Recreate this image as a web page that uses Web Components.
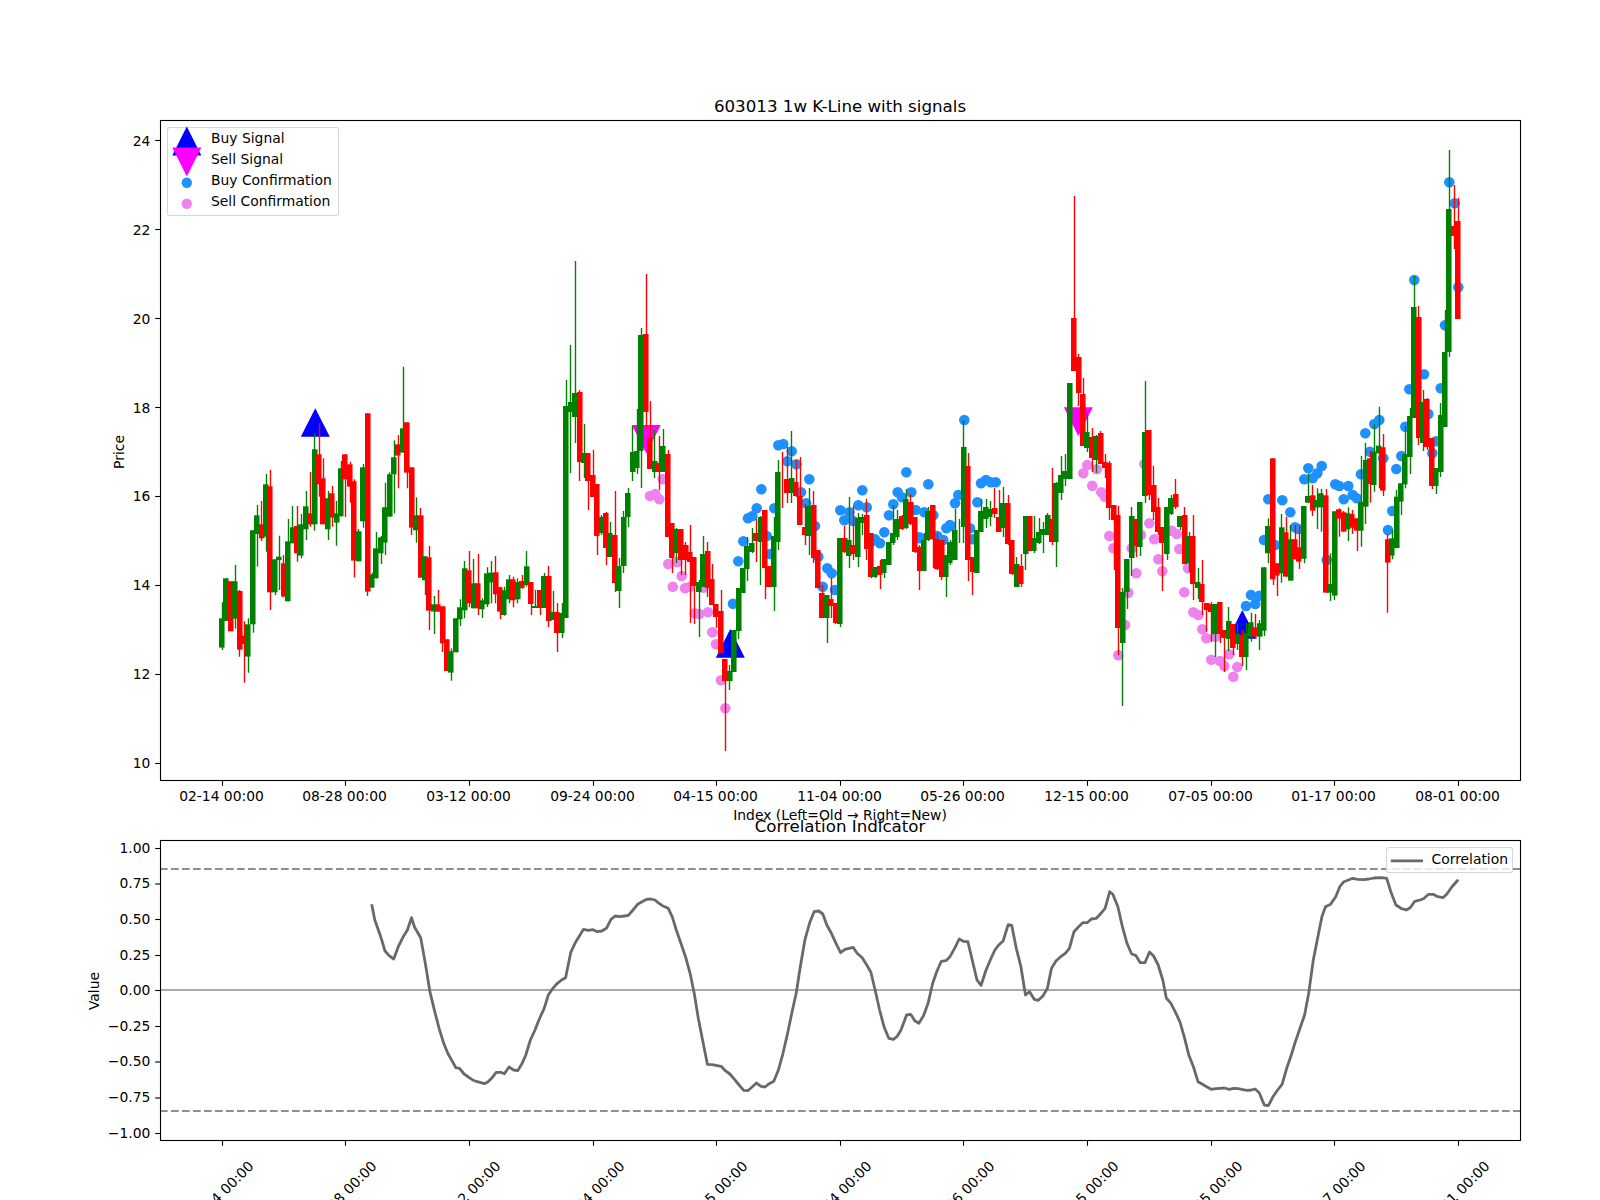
<!DOCTYPE html>
<html><head><meta charset="utf-8"><title>603013 1w K-Line</title>
<style>html,body{margin:0;background:#fff;width:1600px;height:1200px;overflow:hidden}</style>
</head><body>
<chart-figure>
  <price-chart>
    <chart-legend style="left:7px;top:7px;width:172px;height:89px">
      <legend-item kind="up">Buy Signal</legend-item>
      <legend-item kind="down">Sell Signal</legend-item>
      <legend-item kind="blue">Buy Confirmation</legend-item>
      <legend-item kind="violet">Sell Confirmation</legend-item>
    </chart-legend>
  </price-chart>
  <corr-chart>
    <chart-legend style="left:1226px;top:7px;width:127px;height:26px">
      <legend-item kind="line">Correlation</legend-item>
    </chart-legend>
  </corr-chart>
</chart-figure>
<script>
const FONT = `font-family:"DejaVu Sans",sans-serif`;
const X = i => 222.1 + 4.416 * i;
const LABELS = ["02-14 00:00","08-28 00:00","03-12 00:00","09-24 00:00","04-15 00:00","11-04 00:00","05-26 00:00","12-15 00:00","07-05 00:00","01-17 00:00","08-01 00:00"];
const TICKX = LABELS.map((_, k) => Math.floor(X(28 * k)) + .5);

function parseCandles(y0, k, first, text) {
  return text.trim().split(/\n/).map((r, n) => {
    const p = r.trim().split(/\s+/);
    const [t, b, wt, wb] = p.slice(1).map(Number);
    return { i: first + n, c: p[0] === 'G' ? '#008000' : '#ff0000', t: y0 + t / k, b: y0 + b / k, wt: y0 + wt / k, wb: y0 + wb / k, none: t === b };
  });
}
const CANDLES = [
 ...parseCandles(390, 3, 0, `G 685 773 637 780
G 565 693 565 693
R 574 724 574 724
G 574 686 525 716
R 603 779 600 800
R 737 762 694 878
G 703 800 685 848
G 421 703 421 728
G 376 432 345 530
R 403 445 333 453
G 283 440 252 485
R 289 607 240 660
G 508 607 508 615
G 500 510 437 600
R 520 620 495 622
G 454 634 387 634
G 412 460 348 460
R 408 490 348 515
G 403 497 372 505
G 349 418 303 450
R 370 403 246 410
G 178 403 130 422
R 193 283 100 320
R 265 403 205 403
G 325 418 303 450
R 310 383 288 410
G 370 398 333 467
G 235 379 213 379
R 193 268 193 381
R 223 290 215 338
R 274 512 268 562
G 424 514 417 514
G 232 394 222 413
R 70 605 70 618
G 553 593 548 593
G 475 565 426 565
G 442 490 438 522
G 352 458 278 495
G 253 380 247 380
G 202 253 151 370
R 163 197 135 295
G 115 188 -70 188
R 97 248 97 295
R 232 413 232 435
G 376 421 322 458
R 376 563 354 563
G 499 571 499 615
R 502 662 468 720
G 643 665 618 732
R 643 665 600 665
R 649 760 649 786
R 748 843 748 843
G 784 848 775 872
G 685 787 685 787
G 652 688 628 708
G 535 661 513 685
R 541 640 483 652
G 580 655 507 655
R 580 655 492 675
G 631 658 625 684
G 550 643 532 651
G 548 577 513 640
R 547 613 498 640
R 592 665 590 687
G 601 675 590 677
G 568 628 555 640
R 568 631 560 652
G 576 628 565 640
R 573 594 555 596
G 529 585 483 590`),
 ...parseCandles(0, 1, 70, `R 582 604 582 615
G 606 608 590 608
R 590 608 590 615
G 576 608 573 608
R 576 621 566 627
G 612 620 591 620
R 612 633 603 652
G 613 633 603 638
G 406 618 380 618
G 402 412 345 473
G 393 417 261 443
R 392 462 390 481
G 453 463 424 478
R 453 481 453 510
R 475 497 450 497
R 484 536 484 555
G 517 533 515 535
R 513 548 512 565
G 533 557 522 557
R 535 583 491 592
G 566 591 558 608
G 517 566 511 573
G 493 517 488 527
G 452 472 426 481
G 451 468 409 474
G 335 451 328 488
R 334 412 274 429
R 438 469 401 469
G 461 472 430 478
R 463 472 436 490
G 446 472 429 472
R 454 537 450 537
R 523 558 523 573
G 529 553 528 563
R 529 560 529 575
R 545 560 542 575
R 552 562 525 623
R 557 586 557 624
G 582 592 580 637
G 554 587 536 587
R 551 588 542 597
R 579 605 564 605
R 604 617 604 628
R 611 653 590 653
R 659 681 659 751
G 671 681 665 690
G 630 672 630 672
G 588 631 588 639
G 568 593 568 593
G 546 569 537 581
G 543 552 528 553
R 533 541 519 562
G 517 542 516 585
R 510 568 510 599
R 566 587 566 587
G 536 587 517 611
G 472 542 460 550
R 0 0 452 508
R 479 493 447 503
G 478 493 431 503
R 482 496 460 497
R 496 525 457 525
R 527 535 504 545
G 506 536 488 555
R 505 558 491 563
R 550 588 550 588
R 593 618 585 618
G 595 618 595 643
R 599 606 578 618
R 603 623 603 624
G 538 624 538 627
R 538 552 526 553
G 540 556 497 568
R 545 554 506 560
G 518 557 513 567
G 517 523 514 535
R 515 549 499 560
R 533 577 533 578
G 567 577 567 578
R 566 575 560 589
G 559 573 559 578
G 542 565 542 565
G 533 543 505 545
G 519 537 510 540
R 516 529 515 530
G 499 528 489 529
R 502 524 494 525
R 517 552 517 553
R 547 571 545 590
G 540 571 533 571
G 511 540 507 541
R 505 539 505 568
R 539 569 533 570
R 540 577 540 580
G 555 577 555 597
G 542 563 540 565
G 530 560 509 560
G 0 0 519 543
G 447 527 420 543
R 466 560 453 581
R 557 572 557 595
G 530 573 530 573
G 511 532 499 532
G 507 519 499 528
G 509 517 501 526
R 508 514 488 518
R 517 532 490 532
G 503 528 487 537
R 503 544 495 545
R 540 574 540 575
G 564 587 557 587
R 566 584 554 587
G 516 554 516 570
R 516 551 516 551
G 538 551 516 553
G 532 543 518 544
G 529 535 522 553
G 515 535 513 535
R 519 542 468 545
G 483 542 482 567
G 475 493 456 500
G 471 479 454 486
G 383 479 383 479
R 318 371 196 371
R 357 393 354 406
R 394 446 378 446
G 432 448 413 452
R 437 458 428 472
G 436 460 435 473
R 433 464 431 464
R 462 468 454 478
R 463 508 461 520
R 505 520 505 570
R 515 628 506 655
G 592 643 588 706
G 559 592 559 609
G 516 558 507 576
R 519 546 519 557
G 502 547 502 556
G 432 496 381 503
R 430 495 430 500
R 485 512 466 520
R 507 532 498 535
R 527 543 527 591
G 507 554 507 560
G 498 514 495 515
R 494 507 479 509
G 516 527 516 530
R 515 564 507 564
G 536 563 532 572
R 536 584 515 600
G 582 588 568 599
R 584 602 560 615
R 603 610 603 632
R 604 612 602 642
G 604 634 604 657
R 602 634 602 643
R 630 638 630 672
G 621 639 607 651
R 624 648 624 655
G 634 644 623 650
R 635 657 630 666
G 633 657 623 670`),
 ...parseCandles(420, 3, 233, `G 607 650 578 665
R 622 650 582 655
G 610 650 600 690
G 442 632 442 648
G 318 400 295 430
R 115 478 115 495
R 430 467 430 528
G 322 460 282 488
R 337 470 290 470
G 358 482 315 482
R 358 418 315 418
R 382 425 318 447
G 258 416 258 430
G 228 248 160 250
R 226 272 195 288
G 240 262 205 327
G 220 262 207 335
R 226 518 207 518
G 492 518 400 543
G 274 527 274 540
R 268 296 265 350
R 277 335 273 335
G 280 328 262 363
R 282 323 270 342
R 295 332 295 393
G 245 332 108 380
G 120 260 68 312
R 115 192 92 248
G 95 195 12 215
G 77 100 -40 205
R 82 212 42 228
R 358 428 342 578
G 355 407 330 418
G 230 384 210 385
G 190 245 190 285
G 103 193 18 205`),
 ...parseCandles(0, 1, 269, `G 416 457 408 474
G 307 418 276 418
R 317 438 306 445
G 402 443 390 451
R 399 447 398 450
R 438 486 438 489
G 468 486 468 494
G 415 472 403 477
G 352 427 310 427
G 209 352 150 357
R 226 236 185 249
R 221 319 198 319`)
];
const pts = (x0, y0, list) => list.map(([x, y]) => [x0 + x / 3, y0 + y / 3]);
const BLUE = [
 ...pts(550, 240, [[594,835],[607,828],[620,805],[634,748],[673,805],[685,616],[700,612],[725,634],[712,664],[739,673],[778,718],[753,757],[768,790],[795,858],[645,888],[871,811],[883,841],[898,817],[910,843],[925,796],[950,802],[937,751],[975,898],[1003,877],[1017,826],[1030,793],[1043,757],[1056,772],[1069,697],[1084,757],[1097,810],[1123,817],[1135,733],[1150,826],[1189,865],[1200,855],[1108,892],[1162,888]]),
 ...pts(550, 500, [[565,184],[580,124],[549,311],[660,162],[650,108],[805,170],[832,205],[845,220],[818,260],[855,270],[960,130],[975,120],[990,130],[1110,115],[1160,110],[1180,120]]),
 ...pts(950, 190, [[43,690],[93,880],[108,870],[122,877],[137,877]]),
 ...pts(950, 480, [[25,45],[15,70],[82,67],[2,138],[60,145],[68,178]]),
 ...pts(1240, 420, [[18,558],[33,525],[46,552],[58,527],[72,360],[85,238],[105,375],[127,241],[151,277],[165,322],[175,327],[193,178],[205,145],[218,175],[232,160],[245,138],[286,193],[298,198],[325,198],[311,238],[338,225],[350,235],[260,420],[363,163],[376,40],[390,95],[403,12],[418,0],[430,115],[469,147],[484,108],[496,20],[444,330],[457,273],[577,100],[588,64]]),
 ...pts(1240, 130, [[508,778],[523,450],[552,733],[565,852],[602,775],[615,586],[628,157],[644,220],[655,472]])
];
const VIOLET = [
 ...pts(550, 240, [[300,768],[316,762],[328,778],[338,718]]),
 ...pts(550, 500, [[355,192],[382,187],[395,228],[368,260],[405,265],[420,260],[460,263],[434,340],[448,342],[474,337],[487,397],[498,433],[513,541],[526,625]]),
 ...pts(950, 190, [[412,825],[440,838],[400,850],[427,887],[583,822]]),
 ...pts(950, 480, [[454,37],[465,50],[598,130],[478,168],[490,205],[613,178],[545,205],[573,165],[625,238],[637,274],[559,280],[703,337],[730,397],[745,405],[757,448],[769,475],[797,470],[535,338],[525,435],[505,526],[784,539],[810,543],[823,558],[838,523],[862,561],[850,590],[665,152],[680,162],[688,207],[714,265]])
];
const Z9 = [[611,403],[617,450],[628,497],[637,543],[645,557],[654,567],[663,530],[672,502],[681,480],[689,443],[695,472],[707,503],[716,580],[725,665],[734,722],[743,775],[752,820],[760,850],[776,893],[783,895],[792,912],[802,923],[811,932],[823,937],[832,941],[839,935],[846,925],[855,907],[864,907],[871,911],[880,891],[889,900],[897,902],[906,880],[913,855],[922,810],[931,780],[940,745],[949,715],[957,675],[966,655],[975,640],[983,630],[991,623],[1001,548],[1010,518],[1018,498],[1026,478],[1035,481],[1045,479],[1053,485],[1062,483],[1071,475],[1080,448],[1088,438],[1098,440],[1106,438],[1114,436],[1123,420],[1132,403],[1140,396],[1150,388],[1157,387],[1166,390],[1174,400],[1183,409],[1192,415],[1200,440],[1208,480],[1217,520],[1226,560],[1235,610],[1243,670],[1251,745],[1260,815],[1269,883],[1278,884],[1296,889],[1304,902],[1313,912],[1322,928],[1331,945],[1340,961],[1348,962],[1356,952],[1365,939],[1374,949],[1382,951],[1390,941],[1399,934],[1408,900],[1417,850],[1426,790],[1435,725],[1443,670],[1451,590],[1460,510],[1469,460],[1478,425],[1487,423],[1495,432],[1503,465],[1512,490],[1521,520],[1530,548]];
const Z10 = [[88,538],[104,532],[112,550],[122,563],[130,583],[139,607],[148,665],[156,720],[165,772],[174,805],[183,808],[190,800],[198,780],[209,735],[217,733],[225,752],[233,760],[242,737],[251,700],[260,640],[268,605],[277,574],[286,572],[294,560],[303,535],[312,507],[320,514],[329,515],[338,572],[347,630],[355,646],[364,603],[373,570],[382,540],[390,524],[398,513],[408,464],[415,466],[424,535],[433,590],[442,675],[450,665],[459,688],[467,691],[476,678],[485,655],[493,595],[502,572],[511,560],[520,550],[528,535],[537,485],[546,470],[554,458],[563,458],[571,447],[581,445],[590,430],[598,415],[607,365],[613,373],[623,410],[632,470],[641,520],[650,552],[658,556],[667,578],[676,578],[685,546],[693,558],[702,585],[711,630],[718,684],[727,700],[736,727],[745,757],[753,800],[762,855],[771,890],[780,935],[788,942],[797,950],[806,958],[815,956],[824,955],[832,954],[841,958],[850,955],[859,956],[868,959],[877,961],[885,960],[892,957],[900,968],[910,1005],[918,1007],[927,980],[936,960],[945,943],[954,895],[963,855],[971,815],[980,775],[989,735],[997,670],[1006,570],[1015,500],[1023,440],[1030,410],[1040,403],[1050,380],[1058,350],[1066,335],[1075,330],[1083,325],[1093,328],[1105,329],[1115,327],[1125,324],[1140,323],[1150,325],[1158,365],[1168,405],[1178,415],[1188,420],[1196,413],[1205,394],[1215,390],[1222,386],[1232,373],[1241,373],[1250,380],[1260,383],[1268,372],[1278,350],[1290,329]];
const CORR = [...Z9.map(([x,y]) => [60 + x/1.96, 770 + y/3]), ...Z10.map(([x,y]) => [800 + x/1.96, 770 + y/3])];

function axesFrame(x0, y0, x1, y1) {
  return `<rect x="${x0}" y="${y0}" width="${x1-x0}" height="${y1-y0}" fill="none" stroke="#000" stroke-width="1.1"/>`;
}
function yTicks(list) {
  return list.map(([label, y, dy = 4]) => `<line x1="155.2" x2="160" y1="${y}" y2="${y}" stroke="#000" stroke-width="1.1"/><text x="150.3" y="${y+dy}" text-anchor="end" font-size="13.89">${label}</text>`).join('');
}
const panelStyle = `:host{display:block;position:relative;width:1360px;${FONT}}svg{display:block;overflow:visible;${FONT}}`;

class ChartFigure extends HTMLElement {
  constructor() { super();
    this.attachShadow({mode:'open'}).innerHTML = `<style>:host{display:flex;flex-direction:column;gap:60px;box-sizing:border-box;width:1600px;height:1200px;padding:120px 80px 0 160px;overflow:hidden;background:#fff;color:#000}</style><slot></slot>`;
  }
}
class PriceChart extends HTMLElement {
  constructor() { super();
    const tri = (cx, tip, base) => `<polygon points="${cx-14.5},${base} ${cx+14.5},${base} ${cx},${tip}"/>`;
    const ticks = [[24,140.5,5],[22,229.5,5],[20,318.5,5],[18,407.5,5],[16,496.5],[14,585.5],[12,674.5],[10,763.5]];
    const candles = CANDLES.map(c => {
      const wx = Math.floor(X(c.i)) + .5;
      const bx = Math.floor(X(c.i) - 2.75);
      return `<line x1="${wx}" x2="${wx}" y1="${c.wt.toFixed(1)}" y2="${c.wb.toFixed(1)}" stroke="${c.c}" stroke-width="1.39"/>` +
        (c.none ? '' : `<rect x="${bx}" y="${c.t.toFixed(1)}" width="5.55" height="${(c.b-c.t).toFixed(1)}" fill="${c.c}"/>`);
    }).join('');
    this.attachShadow({mode:'open'}).innerHTML = `<style>${panelStyle}:host{height:660px}</style>
    <svg width="1360" height="660" viewBox="160 120 1360 660">
      <text x="840" y="112" text-anchor="middle" font-size="16.67">603013 1w K-Line with signals</text>
      <g fill="#0000ff">${tri(315.3,408.3,436.7)}${tri(730.3,629,657.7)}${tri(1242.3,610,638.7)}</g>
      <g fill="#ff00ff"><polygon points="631.8,425 660.8,425 646.3,453.5"/><polygon points="1063.8,407.3 1092.8,407.3 1078.3,436"/></g>
      <g fill="#1e90ff">${BLUE.map(([x,y]) => `<circle cx="${x.toFixed(1)}" cy="${y.toFixed(1)}" r="5.3"/>`).join('')}</g>
      <g fill="#ee82ee">${VIOLET.map(([x,y]) => `<circle cx="${x.toFixed(1)}" cy="${y.toFixed(1)}" r="5.3"/>`).join('')}</g>
      ${candles}
      ${axesFrame(160.5,120.5,1520.5,780.5)}
      ${yTicks(ticks)}
      ${LABELS.map((l,k) => `<line x1="${TICKX[k]}" x2="${TICKX[k]}" y1="781" y2="785.8" stroke="#000" stroke-width="1.1"/><text x="${TICKX[k]-1}" y="801" text-anchor="middle" font-size="13.89">${l}</text>`).join('')}
      <text x="840" y="820" text-anchor="middle" font-size="13.89">Index (Left=Old → Right=New)</text>
      <text transform="translate(124,452) rotate(-90)" text-anchor="middle" font-size="13.89">Price</text>
    </svg><slot></slot>`;
  }
}
class CorrChart extends HTMLElement {
  constructor() { super();
    const ys = [["1.00",848.5],["0.75",884],["0.50",919.5],["0.25",955.5],["0.00",990.5],["−0.25",1026.5],["−0.50",1062],["−0.75",1098],["−1.00",1133.5]];
    this.attachShadow({mode:'open'}).innerHTML = `<style>${panelStyle}:host{height:300px}</style>
    <svg width="1360" height="300" viewBox="160 840 1360 300">
      <text x="840" y="832" text-anchor="middle" font-size="16.67">Correlation Indicator</text>
      <line x1="160" x2="1520" y1="990" y2="990" stroke="#aaaaaa" stroke-width="2"/>
      <line x1="160" x2="1520" y1="869" y2="869" stroke="#8f8f8f" stroke-width="2" stroke-dasharray="7.7 3.3"/>
      <line x1="160" x2="1520" y1="1111" y2="1111" stroke="#8f8f8f" stroke-width="2" stroke-dasharray="7.7 3.3"/>
      <polyline fill="none" stroke="#696969" stroke-width="2.8" stroke-linejoin="round" points="${CORR.map(([x,y]) => x.toFixed(1)+','+y.toFixed(1)).join(' ')}"/>
      ${axesFrame(160.5,840.5,1520.5,1140.5)}
      ${yTicks(ys)}
      ${LABELS.map((l,k) => `<line x1="${TICKX[k]}" x2="${TICKX[k]}" y1="1141" y2="1145.8" stroke="#000" stroke-width="1.1"/><text transform="translate(${TICKX[k]+32},1167) rotate(-45)" text-anchor="end" font-size="13.89">${l}</text>`).join('')}
      <text transform="translate(99,991) rotate(-90)" text-anchor="middle" font-size="13.89">Value</text>
    </svg><slot></slot>`;
  }
}
class ChartLegend extends HTMLElement {
  constructor() { super();
    this.attachShadow({mode:'open'}).innerHTML = `<style>:host{position:absolute;display:flex;flex-direction:column;box-sizing:border-box;background:rgba(255,255,255,.8);border:1px solid rgba(204,204,204,.8);border-radius:3px;${FONT};font-size:13.89px;color:#000}</style><slot></slot>`;
  }
}
const ICONS = {
  up: `<polygon points="4.3,27.5 33.3,27.5 18.8,-1.5" fill="#0000ff"/>`,
  down: `<polygon points="4.3,-1.5 33.3,-1.5 18.8,27.5" fill="#ff00ff"/>`,
  blue: `<circle cx="18.8" cy="12.8" r="5.2" fill="#1e90ff"/>`,
  violet: `<circle cx="18.8" cy="12.8" r="5.2" fill="#ee82ee"/>`,
  line: `<line x1="3.8" x2="36" y1="11.8" y2="11.8" stroke="#696969" stroke-width="2.8"/>`
};
class LegendItem extends HTMLElement {
  constructor() { super();
    const kind = this.getAttribute('kind');
    const w = kind === 'line' ? 44.5 : 43;
    this.attachShadow({mode:'open'}).innerHTML = `<style>:host{display:flex;align-items:center;height:21px;white-space:nowrap;line-height:21px}:host([kind=line]){height:23px}svg{flex:none;overflow:visible;display:block}</style><svg width="${w}" height="21">${ICONS[kind]}</svg><slot></slot>`;
  }
}
customElements.define('chart-figure', ChartFigure);
customElements.define('price-chart', PriceChart);
customElements.define('corr-chart', CorrChart);
customElements.define('chart-legend', ChartLegend);
customElements.define('legend-item', LegendItem);
</script>
</body></html>
